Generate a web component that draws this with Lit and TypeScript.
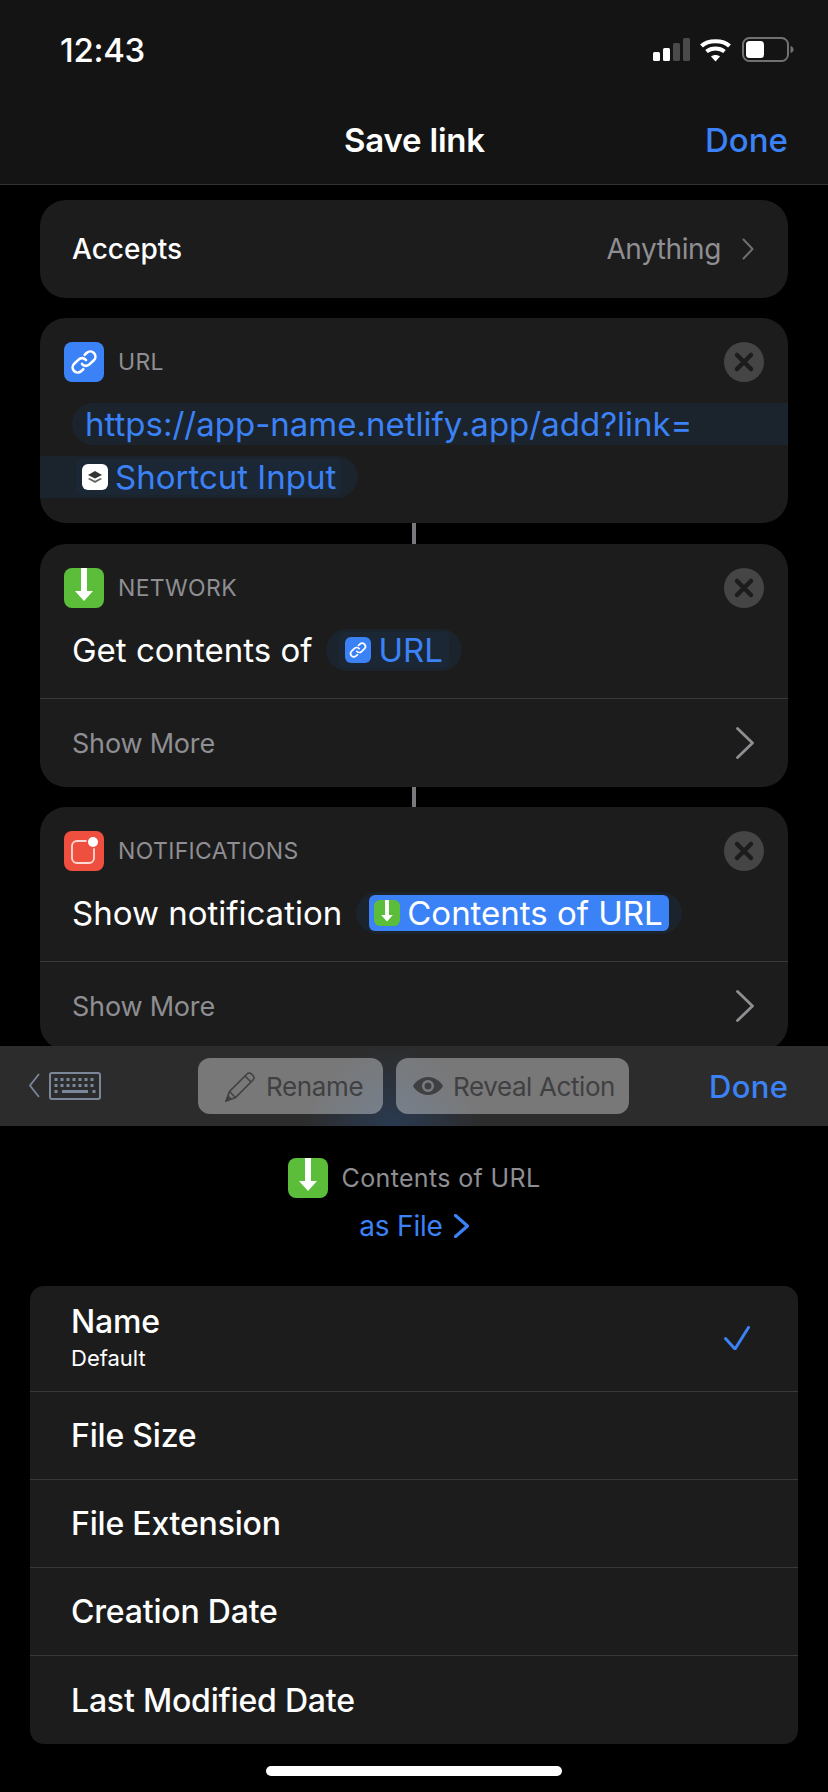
import { LitElement, html, css, svg } from "lit";
import { customElement } from "lit/decorators.js";

const linkIcon = svg`<g fill="none" stroke="#fff" stroke-width="2.6" stroke-linecap="round"><path d="M18 22a5 5 0 0 0 7.400.4l4.700-4.400a5.100 5.100 0 0 0-7.200-7.200l-2.200 2"/><path d="M22 18a5 5 0 0 0-7.400-.4l-4.700 4.400a5.100 5.100 0 0 0 7.200 7.200l2.200-2"/></g>`;
const downIcon = svg`<path d="M17 0h6v23h6l-9 10-9-10h6z" fill="#fff"/>`;

@customElement("app-root")
export class AppRoot extends LitElement {
  static styles = css`
    :host { display: block; width: 828px; height: 1792px; background: #000; color: #fff; font-family: Inter, "Liberation Sans", sans-serif; overflow: hidden; position: relative; }
    * { box-sizing: border-box; }
    .top { height: 185px; background: #141414; border-bottom: 1px solid #333; display: flex; flex-direction: column; }
    .status { height: 86px; padding: 30px 34px 0 60px; display: flex; justify-content: space-between; align-items: flex-start; }
    .time { font-size: 33px; font-weight: 500; line-height: 40px; letter-spacing: -.3px; }
    .sicons { display: block; margin-top: 7px; }
    .nav { height: 98px; display: grid; grid-template-columns: 1fr auto 1fr; align-items: center; padding: 9px 40px 0 41px; }
    .title { grid-column: 2; font-size: 33px; font-weight: 600; letter-spacing: -.2px; }
    .done { grid-column: 3; justify-self: end; font-size: 33px; font-weight: 500; color: #3b82f6; letter-spacing: 0; }
    .scroll { height: 861px; overflow: hidden; padding: 15px 40px 0; display: flex; flex-direction: column; }
    .card { background: #1c1c1c; border-radius: 26px; flex: none; }
    .accepts { height: 98px; margin-bottom: 20px; padding: 0 34px 0 32px; display: flex; align-items: center; justify-content: space-between; font-size: 28px; font-weight: 500; letter-spacing: 0; }
    .val { display: flex; align-items: center; gap: 21px; color: #8e8e93; font-weight: 400; letter-spacing: -.4px; }
    .head { display: flex; align-items: center; height: 40px; margin: 24px 24px 0 24px; }
    .ic { width: 40px; height: 40px; flex: none; border-radius: 8px; display: block; }
    .label { margin-left: 14px; font-size: 23px; color: #8e8e93; flex: 1; letter-spacing: .35px; }
    .x { width: 40px; height: 40px; flex: none; display: block; }
    .line { font-size: 33px; letter-spacing: 0; display: flex; align-items: center; white-space: nowrap; }
    .l1 { height: 42px; margin-top: 21px; padding-left: 32px; }
    .b1 { flex: 1; height: 42px; background: #1b232c; border-radius: 21px 0 0 21px; color: #3b82f6; padding-left: 13px; display: flex; align-items: center; }
    .l2 { height: 42px; margin-top: 11px; }
    .b2 { height: 42px; width: 318px; background: #1b232c; border-radius: 0 21px 21px 0; padding-left: 36px; display: flex; align-items: center; }
    .tok { display: flex; align-items: center; height: 36px; background: #1c2735; border-radius: 5px; color: #3b82f6; padding: 0 6px; gap: 7px; }
    .mini { width: 26px; height: 26px; border-radius: 6px; flex: none; display: block; }
    .conn { width: 4px; height: 21px; background: #7a7a7e; margin-left: 372px; flex: none; }
    .conn.short { height: 20px; }
    .body { height: 42px; margin: 21px 24px 0 32px; gap: 14px; }
    .pill { height: 42px; background: #1b232c; border-radius: 21px; padding: 0 13px; display: flex; align-items: center; }
    .sel { background: #3b82f6; color: #fff; height: 36px; border-radius: 6px; padding: 0 6px 0 5px; display: flex; align-items: center; gap: 7px; }
    .more { border-top: 1px solid #38383a; height: 89px; display: flex; align-items: center; justify-content: space-between; padding: 0 34px 0 32px; font-size: 27px; color: #8e8e93; letter-spacing: -.2px; margin-top: 27px; }
    .toolbar { height: 80px; background: radial-gradient(ellipse 90px 80px at 392px 80px, #2a3a50 0%, #2c2c2c 100%); display: flex; align-items: center; }
    .kb { margin-left: 28px; display: block; }
    .btn { height: 56px; background: rgba(255, 255, 255, .36); border-radius: 12px; color: #404042; font-size: 26px; display: flex; align-items: center; }
    .rename { width: 185px; margin-left: 97px; padding-left: 27px; gap: 10px; letter-spacing: -.35px; }
    .reveal { width: 233px; margin-left: 13px; padding-left: 17px; gap: 10px; letter-spacing: -.4px; }
    .tdone { margin-left: 80px; font-size: 31px; font-weight: 500; color: #3b82f6; letter-spacing: .3px; }
    .sheet { display: flex; flex-direction: column; align-items: center; padding-top: 32px; }
    .src { display: flex; align-items: center; gap: 14px; height: 40px; font-size: 25px; color: #8e8e93; letter-spacing: .35px; }
    .as { display: flex; align-items: center; gap: 11px; color: #3b82f6; font-size: 28px; margin-top: 8px; height: 40px; letter-spacing: -.2px; }
    .list { width: 768px; background: #1c1c1c; border-radius: 14px; margin-top: 40px; font-size: 32px; font-weight: 500; letter-spacing: -.2px; }
    .row { height: 88px; border-bottom: 1px solid #38383a; padding: 0 48px 0 41px; display: flex; align-items: center; justify-content: space-between; }
    .row:last-child { border-bottom: 0; }
    .row.first { height: 106px; align-items: flex-start; padding-top: 16px; }
    .name { line-height: 40px; }
    .sub { font-size: 22px; font-weight: 400; letter-spacing: 0; line-height: 28px; margin-top: 2px; }
    .check { display: block; margin-top: 24px; }
    .home { position: absolute; left: 266px; top: 1766px; width: 296px; height: 10px; background: #fff; border-radius: 5px; }
  `;

  private chevron(w: number, h: number, color: string, sw: number) {
    return html`<svg width=${w} height=${h} viewBox="0 0 ${w} ${h}" style="display:block;flex:none"><path d=${`M1.5 1.5L${w - 1.5} ${h / 2}L1.5 ${h - 1.5}`} fill="none" stroke=${color} stroke-width=${sw} stroke-linecap="round" stroke-linejoin="round"/></svg>`;
  }

  private closeBtn() {
    return html`<svg class="x" viewBox="0 0 40 40"><circle cx="20" cy="20" r="20" fill="#454545"/><path d="M13 13l14 14M27 13L13 27" stroke="#1c1c1c" stroke-width="4.500" stroke-linecap="round"/></svg>`;
  }
  private tile(bg: string, inner: unknown, cls = "ic") {
    return html`<svg class=${cls} viewBox="0 0 40 40"><rect width="40" height="40" fill=${bg}/>${inner}</svg>`;
  }

  private more() {
    return html`<div class="more"><span>Show More</span>${this.chevron(18, 32, "#8e8e93", 2.8)}</div>`;
  }

  render() {
    return html`
      <div class="top">
        <div class="status">
          <span class="time">12:43</span>
          <svg class="sicons" width="141" height="26" viewBox="0 0 141 26">
            <rect x="0" y="15" width="7" height="9" rx="1.500" fill="#fff"/>
            <rect x="10" y="11" width="7" height="13" rx="1.500" fill="#fff"/>
            <rect x="20" y="6" width="7" height="18" rx="1.500" fill="#4a4a4a"/>
            <rect x="30" y="1" width="7" height="23" rx="1.500" fill="#4a4a4a"/>
            <path d="M48.500 9C55 2.500 70 2.500 76.500 9" fill="none" stroke="#fff" stroke-width="4"/>
            <path d="M53.500 14.500C58.500 10.500 66.500 10.500 71.500 14.500" fill="none" stroke="#fff" stroke-width="4"/>
            <path d="M58 19.500L62.500 24.500L67 19.500C64.500 17.500 60.500 17.500 58 19.500Z" fill="#fff"/>
            <rect x="90" y="1" width="45" height="23" rx="6.500" fill="none" stroke="#717171" stroke-width="2"/>
            <rect x="93" y="4" width="18" height="17" rx="3.500" fill="#fff"/>
            <path d="M137.500 9c2 .5 3 1.800 3 3.500s-1 3-3 3.500z" fill="#717171"/>
          </svg>
        </div>
        <div class="nav"><span class="title">Save link</span><span class="done">Done</span></div>
      </div>

      <div class="scroll">
        <div class="card accepts"><span>Accepts</span><span class="val">Anything ${this.chevron(12, 22, "#6e6e73", 2)}</span></div>

        <div class="card">
          <div class="head">${this.tile("#3b82f6", linkIcon)}<span class="label">URL</span>${this.closeBtn()}</div>
          <div class="line l1"><div class="b1">https://app-name.netlify.app/add?link=</div></div>
          <div class="line l2"><div class="b2"><span class="tok">
            <svg class="mini" viewBox="0 0 26 26"><rect width="26" height="26" fill="#fff"/><path d="M13 14.500l-7-3.500 7-4 7 4z" fill="#333"/><path d="M7.500 14l5.500 2.700 5.500-2.700 1.500 1-7 4-7-4z" fill="#666"/></svg>
            Shortcut Input</span></div></div>
          <div style="height:25px"></div>
        </div>
        <div class="conn"></div>

        <div class="card">
          <div class="head">${this.tile("#5bbd3a", downIcon)}<span class="label">NETWORK</span>${this.closeBtn()}</div>
          <div class="line body"><span>Get contents of</span><span class="pill"><span class="tok">
            ${this.tile("#3b82f6", linkIcon, "mini")} URL</span></span></div>
          ${this.more()}
        </div>
        <div class="conn short"></div>

        <div class="card">
          <div class="head">
            <svg class="ic" viewBox="0 0 40 40"><rect width="40" height="40" fill="#ee4f3f"/><rect x="8" y="10" width="22" height="22" rx="5" fill="none" stroke="#ffd9d5" stroke-width="1.800"/><circle cx="29" cy="11" r="6.500" fill="#ee4f3f"/><circle cx="29" cy="11" r="5" fill="#fff"/></svg>
            <span class="label">NOTIFICATIONS</span>${this.closeBtn()}
          </div>
          <div class="line body"><span>Show notification</span><span class="pill"><span class="sel">
            ${this.tile("#5bbd3a", downIcon, "mini")} Contents of URL</span></span></div>
          ${this.more()}
        </div>
      </div>

      <div class="toolbar">
        <svg class="kb" width="73" height="30" viewBox="0 0 73 30">
          <path d="M11 3L2 14.500L11 26" fill="none" stroke="#7a879b" stroke-width="1.800"/>
          <rect x="22" y="2" width="50" height="26" rx="2" fill="none" stroke="#7a879b" stroke-width="2"/>
          <path d="M26.500 8.500h41M26.500 14.500h41" stroke="#7a879b" stroke-width="3" stroke-dasharray="3 3"/>
          <path d="M26.500 20.500h3M34 20.500h26M64.500 20.500h3" stroke="#7a879b" stroke-width="3"/>
        </svg>
        <div class="btn rename">
          <svg width="31" height="31" viewBox="0 0 31 31" style="flex:none"><path d="M1 30l3.500-9.500L22 3a3 3 0 0 1 4.500 0l1.500 1.500a3 3 0 0 1 0 4.500L10.500 26.500z" fill="none" stroke="#404042" stroke-width="1.600"/><path d="M1 30l5.500-2-3.500-3.500z" fill="#404042" stroke="#404042"/><path d="M4.500 20.500l6 6M20 5l6 6" stroke="#404042" stroke-width="1.500"/></svg>
          <span>Rename</span>
        </div>
        <div class="btn reveal">
          <svg width="30" height="18" viewBox="0 0 30 18" style="flex:none"><path fill-rule="evenodd" d="M15 0C23 0 28 5.500 30 9 28 12.500 23 18 15 18S2 12.500 0 9C2 5.500 7 0 15 0zM15 3a6 6 0 1 0 0 12 6 6 0 0 0 0-12z" fill="#404042"/><circle cx="15" cy="9" r="3.500" fill="#404042"/></svg>
          <span>Reveal Action</span>
        </div>
        <span class="tdone">Done</span>
      </div>

      <div class="sheet">
        <div class="src">${this.tile("#5bbd3a", downIcon)}<span>Contents of URL</span></div>
        <div class="as"><span>as File</span>${this.chevron(15, 24, "#3b82f6", 3.2)}</div>
        <div class="list">
          <div class="row first">
            <div><div class="name">Name</div><div class="sub">Default</div></div>
            <svg class="check" width="26" height="24" viewBox="0 0 26 24"><path d="M1.500 12.500L11 23L24.500 1.500" fill="none" stroke="#3b82f6" stroke-width="3" stroke-linecap="round" stroke-linejoin="round"/></svg>
          </div>
          <div class="row">File Size</div>
          <div class="row">File Extension</div>
          <div class="row">Creation Date</div>
          <div class="row">Last Modified Date</div>
        </div>
      </div>
      <div class="home"></div>
    `;
  }
}
